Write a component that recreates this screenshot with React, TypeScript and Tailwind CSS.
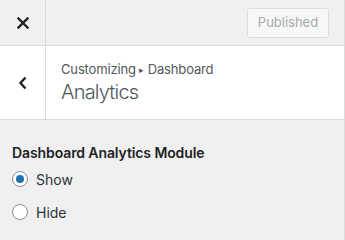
import React from 'react';

const Radio = ({ checked, label }: { checked?: boolean; label: string }) => (
  <label className="flex items-center gap-[8px] h-[20px]">
    <span className="w-[16px] h-[16px] rounded-full border border-[#8c8f94] bg-white flex items-center justify-center">
      {checked && <span className="w-[8px] h-[8px] rounded-full bg-[#2271b1]" />}
    </span>
    <span className="text-[14px] text-[#2c3338]">{label}</span>
  </label>
);

export default function App() {
  return (
    <div
      className="w-[345px] h-[240px] bg-[#f0f0f1] border-r border-[#dcdcde] overflow-hidden"
      style={{ fontFamily: 'Inter, "Liberation Sans", sans-serif' }}
    >
      {/* Top bar */}
      <div className="h-[46px] flex border-b border-[#dcdcde]">
        <button className="w-[46px] border-r border-[#dcdcde] flex items-center justify-center">
          <svg width="12" height="12" viewBox="0 0 12 12">
            <path d="M1.5 1.5 L10.5 10.5 M10.5 1.5 L1.5 10.5" stroke="#1d2327" strokeWidth="2.4" strokeLinecap="square" />
          </svg>
        </button>
        <div className="flex-1 flex items-center justify-end pr-[15px]">
          <button className="h-[30px] w-[82px] rounded-[3px] border border-[#dcdcde] bg-[#f6f7f7] text-[13px] text-[#a7aaad]">
            Published
          </button>
        </div>
      </div>

      {/* Section header */}
      <div className="h-[74px] bg-white flex border-b border-[#dcdcde]">
        <button className="w-[46px] border-r border-[#dcdcde] flex items-center justify-center">
          <svg width="10" height="14" viewBox="0 0 10 14">
            <path d="M7.5 1.5 L2.5 7 L7.5 12.5" fill="none" stroke="#1d2327" strokeWidth="2.4" />
          </svg>
        </button>
        <div className="flex-1 pl-[15px] flex flex-col justify-center">
          <span className="text-[13px] leading-[18px] text-[#50575e] tracking-[-0.15px]">
            Customizing <span className="text-[9px] align-[1px]">▸</span> Dashboard
          </span>
          <span className="text-[20px] leading-[26px] font-light text-[#50575e] tracking-[-0.8px]">Analytics</span>
        </div>
      </div>

      {/* Control */}
      <div className="px-[12px] pt-[23px]">
        <div className="text-[14px] leading-[20px] font-semibold text-[#1d2327] tracking-[-0.1px] mb-[6px]">
          Dashboard Analytics Module
        </div>
        <div className="flex flex-col gap-[13px]">
          <Radio checked label="Show" />
          <Radio label="Hide" />
        </div>
      </div>
    </div>
  );
}
